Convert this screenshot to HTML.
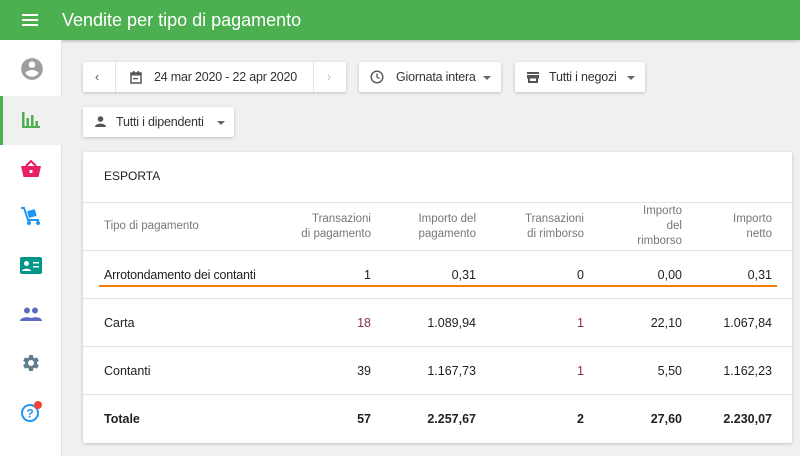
<!DOCTYPE html>
<html><head><meta charset="utf-8"><style>
*{box-sizing:border-box;margin:0;padding:0}
body{width:800px;height:456px;overflow:hidden;background:#f0f0f0;font-family:"Liberation Sans",Arial,sans-serif;color:#212121;position:relative}
.top{position:absolute;left:0;top:0;width:800px;height:40px;background:#4caf50;color:#fff;box-shadow:0 1px 3px rgba(0,0,0,.25)}
.top .t{position:absolute;left:62px;top:10px;font-size:18px}
.side{position:absolute;left:0;top:40px;width:62px;height:416px;background:#fff;border-right:1px solid #e0e0e0}
.ic{position:absolute;left:19px}
.btn{position:absolute;background:#fff;height:30px;box-shadow:0 1px 3px rgba(0,0,0,.2);border-radius:2px;font-size:12.5px;line-height:30px;color:#333;white-space:nowrap}
.card{position:absolute;left:83px;top:152px;width:709px;height:291px;background:#fff;box-shadow:0 1px 3px rgba(0,0,0,.2);border-radius:2px}
.row{position:absolute;left:0;width:709px;border-top:1px solid #e3e3e3;font-size:12.5px}
.c{position:absolute;text-align:right}
.h{color:#777;font-size:11.5px;line-height:15px}
.r{color:#8a2e4e}
.arr{position:absolute;width:0;height:0;border-left:4px solid transparent;border-right:4px solid transparent;border-top:4px solid #666;top:14px}
</style></head><body>
<div class="top">
<svg style="position:absolute;left:22px;top:14px" width="16" height="12"><rect y="0" width="16" height="2" fill="#fff"/><rect y="5" width="16" height="2" fill="#fff"/><rect y="10" width="16" height="2" fill="#fff"/></svg>
<div class="t">Vendite per tipo di pagamento</div></div>
<div class="side">
<svg class="ic" style="top:16px" width="26" height="26" viewBox="0 0 24 24"><path fill="#9e9e9e" d="M12 2C6.48 2 2 6.48 2 12s4.48 10 10 10 10-4.48 10-10S17.52 2 12 2zm0 3c1.66 0 3 1.34 3 3s-1.34 3-3 3-3-1.34-3-3 1.34-3 3-3zm0 14.2c-2.5 0-4.710-1.28-6-3.22.03-1.99 4-3.08 6-3.08 1.99 0 5.97 1.09 6 3.08-1.29 1.94-3.5 3.22-6 3.22z"/></svg>
<div style="position:absolute;left:0;top:56px;width:62px;height:49px;background:#f0f0f0;border-left:3px solid #4caf50"></div>
<svg class="ic" style="top:72px;left:22px" width="18" height="16"><g fill="#4caf50"><rect x="0" y="0" width="2.5" height="16"/><rect x="4.5" y="6" width="2.5" height="10"/><rect x="9" y="3" width="2.5" height="13"/><rect x="13.5" y="9" width="2.5" height="7"/><rect x="0" y="14" width="18" height="2"/></g></svg>
<svg class="ic" style="top:120px;left:21px" width="20" height="18" viewBox="0 0 20 18"><path fill="#e91e63" d="M0 6h20l-2.5 11h-15z"/><path d="M5 6l5-5 5 5" stroke="#e91e63" stroke-width="2" fill="none"/><circle cx="10" cy="11.5" r="1.6" fill="#fff"/></svg>
<svg class="ic" style="top:166px;left:20px" width="22" height="20" viewBox="0 0 22 20"><path d="M1 2h3l4 12h11" stroke="#2196f3" stroke-width="2" fill="none"/><rect x="8" y="4" width="8" height="7" fill="#2196f3" transform="rotate(-15 12 8)"/><circle cx="9" cy="17" r="2" fill="#2196f3"/><circle cx="18" cy="17" r="2" fill="#2196f3"/></svg>
<svg class="ic" style="top:217px;left:20px" width="22" height="17"><rect width="22" height="17" rx="2" fill="#009688"/><circle cx="6.5" cy="6.5" r="2.5" fill="#fff"/><path d="M2 14c0-3 9-3 9 0z" fill="#fff"/><rect x="13" y="5" width="6" height="1.5" fill="#fff"/><rect x="13" y="9" width="6" height="1.5" fill="#fff"/></svg>
<svg class="ic" style="top:267px;left:20px" width="22" height="14"><g fill="#5c6bc0"><circle cx="7" cy="3.5" r="3"/><circle cx="15" cy="3.5" r="3"/><path d="M0 14c0-5 14-5 14 0z"/><path d="M9 14c0-5 13-5 13 0z"/></g></svg>
<svg class="ic" style="top:313px;left:21px" width="20" height="20" viewBox="0 0 24 24"><path fill="#607d8b" d="M19.14 12.94c.04-.3.06-.61.06-.94s-.02-.64-.07-.94l2.03-1.58a.49.49 0 0 0 .12-.61l-1.92-3.32a.49.49 0 0 0-.59-.22l-2.39.96c-.5-.38-1.03-.7-1.620-.94l-.36-2.54a.48.48 0 0 0-.48-.41h-3.84a.48.48 0 0 0-.47.41l-.36 2.54c-.59.24-1.13.57-1.62.94l-2.39-.96a.48.48 0 0 0-.59.22L2.74 8.87a.47.47 0 0 0 .12.61l2.03 1.58c-.05.3-.09.63-.09.94s.02.64.07.94l-2.03 1.58a.49.49 0 0 0-.12.61l1.92 3.32c.12.22.37.29.59.22l2.39-.96c.5.38 1.03.7 1.62.94l.36 2.54c.05.24.24.41.48.41h3.84c.24 0 .44-.17.47-.41l.36-2.54c.59-.24 1.13-.56 1.62-.94l2.39.96c.22.08.47 0 .59-.22l1.92-3.32a.47.47 0 0 0-.12-.61zM12 15.6A3.6 3.6 0 1 1 12 8.4a3.6 3.6 0 0 1 0 7.2z"/></svg>
<svg class="ic" style="top:360px;left:20px" width="24" height="24" viewBox="0 0 24 24"><circle cx="10" cy="13" r="8" stroke="#2196f3" stroke-width="2" fill="none"/><text x="10" y="17.5" font-size="12" font-weight="bold" fill="#2196f3" text-anchor="middle" font-family="Liberation Sans">?</text><circle cx="18" cy="5" r="4" fill="#f44336"/></svg>
</div>

<div class="btn" style="left:83px;top:62px;width:263px">
<span style="position:absolute;left:12px;top:0;color:#555">&#8249;</span>
<div style="position:absolute;left:32px;top:0;width:1px;height:30px;background:#e5e5e5"></div>
<svg style="position:absolute;left:47px;top:9px" width="12" height="13"><rect x="1" y="2" width="10" height="10" fill="none" stroke="#555" stroke-width="1.5"/><rect x="1" y="2" width="10" height="2.5" fill="#555"/><rect x="3" y="0" width="1.5" height="3" fill="#555"/><rect x="7.5" y="0" width="1.5" height="3" fill="#555"/><rect x="3" y="7" width="5" height="1.3" fill="#555"/></svg>
<span style="position:absolute;left:71px;letter-spacing:-0.2px">24 mar 2020 - 22 apr 2020</span>
<div style="position:absolute;left:230px;top:0;width:1px;height:30px;background:#e5e5e5"></div>
<span style="position:absolute;left:244px;color:#bbb">&#8250;</span></div>
<div class="btn" style="left:359px;top:62px;width:142px">
<svg style="position:absolute;left:11px;top:8px" width="14" height="14"><circle cx="7" cy="7" r="5.8" fill="none" stroke="#555" stroke-width="1.4"/><path d="M7 3.5V7l2.5 1.5" stroke="#555" stroke-width="1.3" fill="none"/></svg>
<span style="position:absolute;left:37px;letter-spacing:-0.2px">Giornata intera</span><span class="arr" style="left:124px"></span></div>
<div class="btn" style="left:515px;top:62px;width:130px">
<svg style="position:absolute;left:12px;top:10px" width="12" height="11"><rect width="12" height="2" fill="#555"/><rect y="3" width="12" height="3.5" fill="#555"/><rect x="1" y="6" width="2" height="5" fill="#555"/><rect x="1" y="9" width="10" height="2" fill="#555"/><rect x="9" y="6" width="2" height="5" fill="#555"/></svg>
<span style="position:absolute;left:34px;letter-spacing:-0.2px">Tutti i negozi</span><span class="arr" style="left:112px"></span></div>
<div class="btn" style="left:83px;top:107px;width:151px">
<svg style="position:absolute;left:12px;top:9px" width="11" height="11"><circle cx="5.5" cy="3" r="2.8" fill="#555"/><path d="M0 11c0-4.5 11-4.5 11 0z" fill="#555"/></svg>
<span style="position:absolute;left:33px;letter-spacing:-0.2px">Tutti i dipendenti</span><span class="arr" style="left:134px"></span></div>

<div class="card">
<div style="position:absolute;left:21px;top:17px;font-size:12px;color:#222">ESPORTA</div>
<div class="row" style="top:50px;height:48px">
<div class="h" style="position:absolute;left:21px;top:16px">Tipo di pagamento</div>
<div class="c h" style="right:421px;top:9px">Transazioni<br>di pagamento</div>
<div class="c h" style="right:316px;top:9px">Importo del<br>pagamento</div>
<div class="c h" style="right:208px;top:9px">Transazioni<br>di rimborso</div>
<div class="c h" style="right:110px;top:1px">Importo<br>del<br>rimborso</div>
<div class="c h" style="right:20px;top:9px">Importo<br>netto</div></div>
<div class="row" style="top:98px;height:48px">
<div style="position:absolute;left:21px;top:17px;letter-spacing:-0.2px">Arrotondamento dei contanti</div>
<div class="c" style="right:421px;top:17px">1</div><div class="c" style="right:316px;top:17px">0,31</div><div class="c" style="right:208px;top:17px">0</div><div class="c" style="right:110px;top:17px">0,00</div><div class="c" style="right:20px;top:17px">0,31</div>
<div style="position:absolute;left:16px;top:34px;width:678px;height:2px;background:#f57c00"></div></div>
<div class="row" style="top:146px;height:48px">
<div style="position:absolute;left:21px;top:17px">Carta</div>
<div class="c r" style="right:421px;top:17px">18</div><div class="c" style="right:316px;top:17px">1.089,94</div><div class="c r" style="right:208px;top:17px">1</div><div class="c" style="right:110px;top:17px">22,10</div><div class="c" style="right:20px;top:17px">1.067,84</div></div>
<div class="row" style="top:194px;height:48px">
<div style="position:absolute;left:21px;top:17px">Contanti</div>
<div class="c" style="right:421px;top:17px">39</div><div class="c" style="right:316px;top:17px">1.167,73</div><div class="c r" style="right:208px;top:17px">1</div><div class="c" style="right:110px;top:17px">5,50</div><div class="c" style="right:20px;top:17px">1.162,23</div></div>
<div class="row" style="top:242px;height:49px;font-weight:bold">
<div style="position:absolute;left:21px;top:17px">Totale</div>
<div class="c" style="right:421px;top:17px">57</div><div class="c" style="right:316px;top:17px">2.257,67</div><div class="c" style="right:208px;top:17px">2</div><div class="c" style="right:110px;top:17px">27,60</div><div class="c" style="right:20px;top:17px">2.230,07</div></div>
</div>
</body></html>
